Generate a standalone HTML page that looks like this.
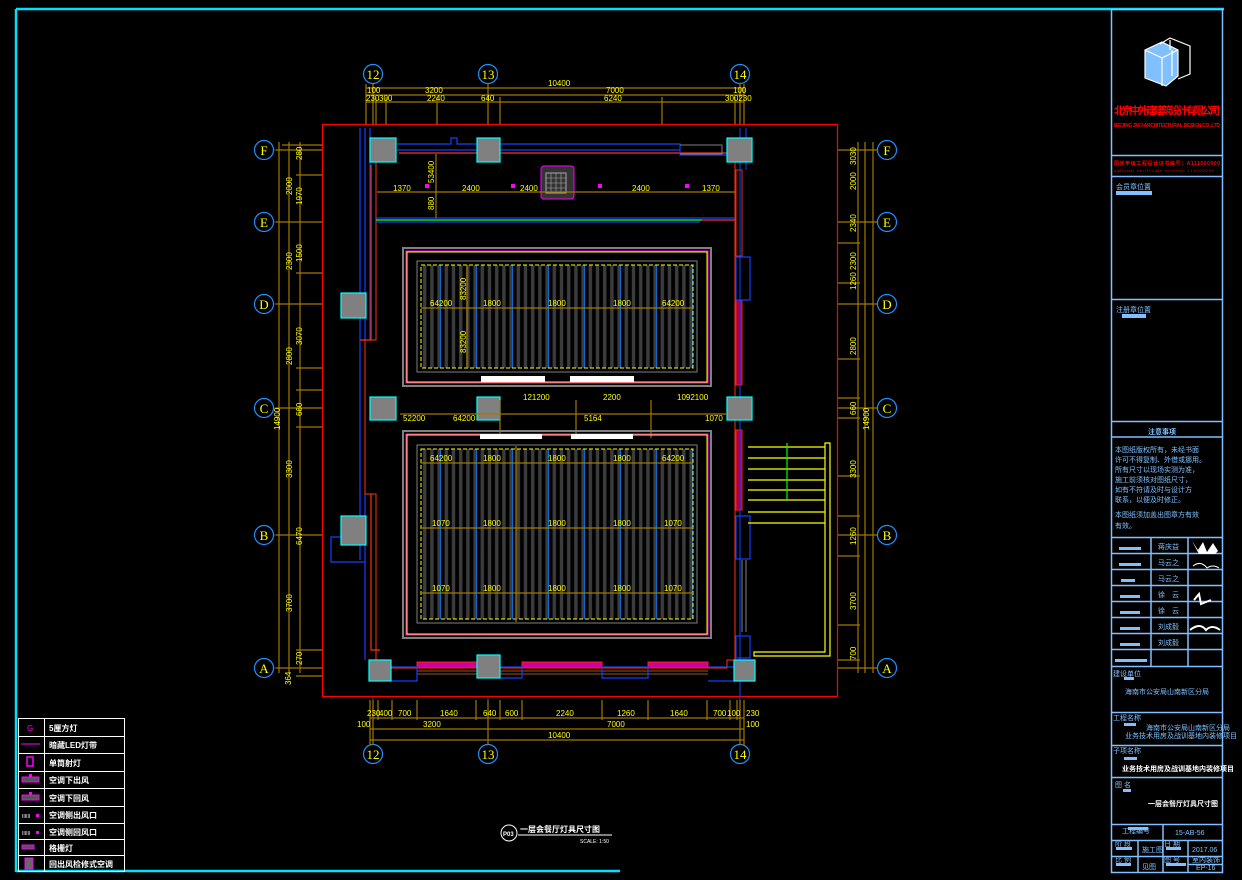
<!DOCTYPE html>
<html><head><meta charset="utf-8"><style>
html,body{margin:0;padding:0;background:#000;width:1242px;height:880px;overflow:hidden}
svg{display:block}
text{font-family:"Liberation Sans","Noto Sans CJK SC",sans-serif}
.y{fill:#ffff00;font-size:8px}
.d{stroke:#a07800;stroke-width:1.2;fill:none}
.g{fill:#808080;stroke:#00ffff;stroke-width:1.2}
.b{stroke:#1040ff;fill:none;stroke-width:1.2}
.gc{fill:none;stroke:#1e90ff;stroke-width:1.2}
.gt{fill:#ffff00;font-size:13px;font-family:"Liberation Serif",serif;text-anchor:middle}
.tb{stroke:#80c0ff;fill:none;stroke-width:1.5}
.tbt{fill:#80c0ff;font-size:7px}
.w{fill:#ffffff;font-size:8px;font-weight:bold}
</style></head><body>
<svg width="1242" height="880" viewBox="0 0 1242 880" xmlns="http://www.w3.org/2000/svg">
<defs>
<pattern id="st" x="421" y="0" width="7.2" height="10" patternUnits="userSpaceOnUse">
<rect x="2" y="0" width="3.4" height="10" fill="#3c3c3c"/>
</pattern>
<pattern id="bl" x="421" y="0" width="36" height="10" patternUnits="userSpaceOnUse">
<rect x="19" y="0" width="1" height="10" fill="#0a6cd0"/>
</pattern>
</defs>
<path d="M16 9H1224M16 9V872M16 871H620" stroke="#00e0ff" stroke-width="2.5" fill="none"/>
<rect x="322.5" y="124.5" width="515" height="572" fill="none" stroke="#ff0000" stroke-width="1.2"/>
<path d="M373 84V124M488 84V124M740 84V124M373 697V743M488 697V743M740 697V743" stroke="#1040ff"/>
<path d="M273 150H322M273 222H322M273 304H322M273 408H322M273 535H322M273 668H322M838 150H877M838 222H877M838 304H877M838 408H877M838 535H877M838 668H877" stroke="#1040ff"/>
<g>
<circle cx="373" cy="74" r="9.5" class="gc"/><text x="373" y="79" class="gt">12</text>
<circle cx="488" cy="74" r="9.5" class="gc"/><text x="488" y="79" class="gt">13</text>
<circle cx="740" cy="74" r="9.5" class="gc"/><text x="740" y="79" class="gt">14</text>
<circle cx="373" cy="754" r="9.5" class="gc"/><text x="373" y="759" class="gt">12</text>
<circle cx="488" cy="754" r="9.5" class="gc"/><text x="488" y="759" class="gt">13</text>
<circle cx="740" cy="754" r="9.5" class="gc"/><text x="740" y="759" class="gt">14</text>
<circle cx="264" cy="150" r="9.5" class="gc"/><text x="264" y="155" class="gt">F</text>
<circle cx="264" cy="222" r="9.5" class="gc"/><text x="264" y="227" class="gt">E</text>
<circle cx="264" cy="304" r="9.5" class="gc"/><text x="264" y="309" class="gt">D</text>
<circle cx="264" cy="408" r="9.5" class="gc"/><text x="264" y="413" class="gt">C</text>
<circle cx="264" cy="535" r="9.5" class="gc"/><text x="264" y="540" class="gt">B</text>
<circle cx="264" cy="668" r="9.5" class="gc"/><text x="264" y="673" class="gt">A</text>
<circle cx="887" cy="150" r="9.5" class="gc"/><text x="887" y="155" class="gt">F</text>
<circle cx="887" cy="222" r="9.5" class="gc"/><text x="887" y="227" class="gt">E</text>
<circle cx="887" cy="304" r="9.5" class="gc"/><text x="887" y="309" class="gt">D</text>
<circle cx="887" cy="408" r="9.5" class="gc"/><text x="887" y="413" class="gt">C</text>
<circle cx="887" cy="535" r="9.5" class="gc"/><text x="887" y="540" class="gt">B</text>
<circle cx="887" cy="668" r="9.5" class="gc"/><text x="887" y="673" class="gt">A</text>
</g>
<path class="d" d="M366 88H744M366 95H744M366 102H744M366 84V124M373 84V124M376 97V124M386 97V124M437 97V124M662 97V124M488 84V124M500 97V124M735 97V124M740 84V124M744 84V124"/>
<text class="y" x="548" y="86">10400</text><text class="y" x="367" y="93">100</text><text class="y" x="425" y="93">3200</text><text class="y" x="606" y="93">7000</text><text class="y" x="733" y="93">100</text>
<text class="y" x="366" y="101">230</text><text class="y" x="379" y="101">300</text><text class="y" x="427" y="101">2240</text><text class="y" x="481" y="101">640</text><text class="y" x="604" y="101">6240</text><text class="y" x="725" y="101">300230</text>
<path class="d" d="M370 718H744M370 729H744M370 740H744M370 700V745M373 700V745M378 700V720M392 700V720M417 700V720M476 700V720M488 700V745M500 700V720M522 700V720M602 700V720M648 700V720M707 700V720M730 700V720M737 700V720M740 700V745M744 700V745"/>
<text class="y" x="367" y="716">230</text><text class="y" x="379" y="716">400</text><text class="y" x="398" y="716">700</text><text class="y" x="440" y="716">1640</text><text class="y" x="483" y="716">640</text><text class="y" x="505" y="716">600</text><text class="y" x="556" y="716">2240</text><text class="y" x="617" y="716">1260</text><text class="y" x="670" y="716">1640</text><text class="y" x="713" y="716">700</text><text class="y" x="727" y="716">100</text><text class="y" x="746" y="716">230</text>
<text class="y" x="357" y="727">100</text><text class="y" x="423" y="727">3200</text><text class="y" x="607" y="727">7000</text><text class="y" x="746" y="727">100</text>
<text class="y" x="548" y="738">10400</text>
<path class="d" d="M279 142V673M289 142V673M300 142V673M276 150H322M276 222H322M276 304H322M276 408H322M276 535H322M276 668H322M296 175H322M296 273H322M296 368H322M296 390H322M296 427H322M296 650H322M296 676H322M282 145H322"/>
<g class="y" font-size="8">
<text transform="translate(292,195) rotate(-90)">2000</text><text transform="translate(292,270) rotate(-90)">2300</text><text transform="translate(292,365) rotate(-90)">2800</text><text transform="translate(292,478) rotate(-90)">3300</text><text transform="translate(292,612) rotate(-90)">3700</text>
<text transform="translate(302,205) rotate(-90)">1970</text><text transform="translate(302,262) rotate(-90)">1500</text><text transform="translate(302,345) rotate(-90)">3070</text><text transform="translate(302,416) rotate(-90)">660</text><text transform="translate(302,545) rotate(-90)">6470</text><text transform="translate(302,665) rotate(-90)">270</text><text transform="translate(302,160) rotate(-90)">280</text>
<text transform="translate(280,430) rotate(-90)">14900</text><text transform="translate(291,685) rotate(-90)">364</text>
</g>
<path class="d" d="M858 142V673M865 142V673M873 142V673M838 150H877M838 222H877M838 304H877M838 408H877M838 535H877M838 668H877M838 243H860M838 283H860M838 359H860M838 398H860M838 418H860M838 476H860M838 516H860M838 556H860M838 625H860M838 660H860"/>
<g class="y" font-size="8">
<text transform="translate(856,190) rotate(-90)">2000</text><text transform="translate(856,232) rotate(-90)">2340</text><text transform="translate(856,270) rotate(-90)">2300</text><text transform="translate(856,290) rotate(-90)">1260</text><text transform="translate(856,355) rotate(-90)">2800</text><text transform="translate(856,415) rotate(-90)">660</text><text transform="translate(856,478) rotate(-90)">3300</text><text transform="translate(856,545) rotate(-90)">1260</text><text transform="translate(856,610) rotate(-90)">3700</text><text transform="translate(856,660) rotate(-90)">700</text>
<text transform="translate(869,430) rotate(-90)">14900</text><text transform="translate(856,165) rotate(-90)">3030</text>
</g>
<path class="b" d="M360 128V340M365 128V340M370 128V340M360 494V560M365 494V660M360 340V494M331 537H365V562H331Z"/>
<path d="M371 165V340H360M371 494V650H380M399 153H727M376 220H735" stroke="#ff3010" stroke-width="1.2" fill="none"/>
<path d="M376 160V340H365V494H376V660H388V668H727V660H735V155" stroke="#ff3010" fill="none"/>
<path class="b" d="M397 144H451V138H457V144H477M500 144H680V155H727M397 150H680M376 218H735M376 222H700" />
<path d="M376 220H702" stroke="#00ff00" stroke-width="1.2"/>
<path d="M680 145H722V154H680" stroke="#808080" fill="none"/>
<rect x="736" y="170" width="6" height="86" fill="none" stroke="#ff2000"/>
<rect x="736" y="300" width="6" height="85" fill="#a00050" stroke="#ff2000"/>
<rect x="736" y="430" width="6" height="80" fill="#a00050" stroke="#ff2000"/>
<rect x="736" y="257" width="14" height="43" class="b"/>
<rect x="736" y="516" width="14" height="43" class="b"/>
<rect x="736" y="636" width="14" height="22" class="b"/>
<path d="M740 128V700M746 128V170" stroke="#1040ff" fill="none"/>
<path d="M742 560V632M746 560V632" stroke="#808080"/>
<rect x="417" y="662" width="60" height="6" fill="#d000a0" stroke="#ff2000"/>
<rect x="522" y="662" width="80" height="6" fill="#d000a0" stroke="#ff2000"/>
<rect x="648" y="662" width="60" height="6" fill="#d000a0" stroke="#ff2000"/>
<path d="M417 671H708M417 674H708" stroke="#a05020"/>
<path class="b" d="M391 667H417V681H391M500 667H522V678H500M602 667H648V678H602ZM708 667H734V681H708"/>
<g stroke="#ffff00" fill="none" stroke-width="1.2">
<path d="M748 447H825M748 458H825M748 469H825M748 480H825M748 490H825M748 500H825M748 512H825M748 523H825"/>
<path d="M825 443H830V656H754V652H825Z"/>
</g>
<path d="M787 443V500" stroke="#00ff00" stroke-width="1.2"/>
<rect class="g" x="370" y="138" width="26" height="24"/>
<rect class="g" x="477" y="138" width="23" height="24"/>
<rect class="g" x="727" y="138" width="25" height="24"/>
<rect class="g" x="341" y="293" width="25" height="25"/>
<rect class="g" x="370" y="397" width="26" height="23"/>
<rect class="g" x="477" y="397" width="23" height="23"/>
<rect class="g" x="727" y="397" width="25" height="23"/>
<rect class="g" x="341" y="516" width="25" height="29"/>
<rect class="g" x="369" y="660" width="22" height="21"/>
<rect class="g" x="477" y="655" width="23" height="23"/>
<rect class="g" x="734" y="660" width="21" height="21"/>
<rect x="541" y="166" width="33" height="33" fill="#333" stroke="#ff00ff" rx="3"/>
<rect x="546" y="173" width="20" height="20" fill="none" stroke="#aaa"/>
<path d="M546 178H566M546 183H566M546 188H566M551 173V193M556 173V193M561 173V193" stroke="#aaa" stroke-width="0.6"/>
<path class="d" d="M377 192H735M436 154V218"/>
<text class="y" x="393" y="191">1370</text><text class="y" x="462" y="191">2400</text><text class="y" x="520" y="191">2400</text><text class="y" x="632" y="191">2400</text><text class="y" x="702" y="191">1370</text>
<text class="y" transform="translate(434,183) rotate(-90)">53400</text><text class="y" transform="translate(434,210) rotate(-90)">880</text>
<g fill="#ff00ff"><rect x="425" y="184" width="4" height="4"/><rect x="511" y="184" width="4" height="4"/><rect x="598" y="184" width="4" height="4"/><rect x="685" y="184" width="4" height="4"/></g>
<rect x="403" y="248" width="308" height="138" fill="none" stroke="#808080" stroke-width="2"/>
<rect x="406" y="251" width="302" height="132" fill="none" stroke="#ff00ff"/>
<rect x="407" y="252" width="300" height="130" fill="none" stroke="#ffff00"/>
<rect x="417" y="261" width="280" height="111" fill="none" stroke="#808080"/>
<rect x="421" y="265" width="272" height="103" fill="url(#st)"/>
<rect x="421" y="265" width="272" height="103" fill="url(#bl)"/>
<rect x="421" y="265" width="272" height="103" fill="none" stroke="#ffff00" stroke-dasharray="4 2"/>
<path class="d" d="M421 308H693M467 265V368"/>
<text class="y" x="430" y="306">64200</text><text class="y" x="483" y="306">1800</text><text class="y" x="548" y="306">1800</text><text class="y" x="613" y="306">1800</text><text class="y" x="662" y="306">64200</text>
<text class="y" transform="translate(466,300) rotate(-90)">83200</text><text class="y" transform="translate(466,353) rotate(-90)">83200</text>
<rect x="481" y="376" width="64" height="6" fill="#fff"/><rect x="570" y="376" width="64" height="6" fill="#fff"/>
<path class="d" d="M400 414H727M500 400V438M576 400V438M651 400V438"/>
<text class="y" x="403" y="421">52200</text><text class="y" x="453" y="421">64200</text><text class="y" x="523" y="400">121200</text><text class="y" x="603" y="400">2200</text><text class="y" x="677" y="400">1092100</text><text class="y" x="584" y="421">5164</text><text class="y" x="705" y="421">1070</text>
<rect x="403" y="431" width="308" height="207" fill="none" stroke="#808080" stroke-width="2"/>
<rect x="406" y="434" width="302" height="201" fill="none" stroke="#ff00ff"/>
<rect x="407" y="435" width="300" height="199" fill="none" stroke="#ffff00"/>
<rect x="417" y="445" width="280" height="178" fill="none" stroke="#808080"/>
<rect x="421" y="449" width="272" height="170" fill="url(#st)"/>
<rect x="421" y="449" width="272" height="170" fill="url(#bl)"/>
<rect x="421" y="449" width="272" height="170" fill="none" stroke="#ffff00" stroke-dasharray="4 2"/>
<rect x="480" y="434" width="62" height="5" fill="#fff"/><rect x="571" y="434" width="62" height="5" fill="#fff"/>
<path class="d" d="M421 463H693M421 528H693M421 593H693M516 446V622"/>
<g class="y">
<text x="430" y="461">64200</text><text x="483" y="461">1800</text><text x="548" y="461">1800</text><text x="613" y="461">1800</text><text x="662" y="461">64200</text>
<text x="432" y="526">1070</text><text x="483" y="526">1800</text><text x="548" y="526">1800</text><text x="613" y="526">1800</text><text x="664" y="526">1070</text>
<text x="432" y="591">1070</text><text x="483" y="591">1800</text><text x="548" y="591">1800</text><text x="613" y="591">1800</text><text x="664" y="591">1070</text>
</g>
<g stroke="#fff" fill="none" stroke-width="1">
<rect x="18.5" y="718.5" width="106" height="153"/>
<path d="M44.5 718V871M18 736.5H125M18 753.5H125M18 771.5H125M18 788.5H125M18 806.5H125M18 823.5H125M18 839.5H125M18 855.5H125"/>
</g>
<g class="w" font-size="8.5">
<text x="49" y="731">5厘方灯</text><text x="49" y="748">暗藏LED灯带</text><text x="49" y="766">单筒射灯</text><text x="49" y="783">空调下出风</text><text x="49" y="801">空调下回风</text><text x="49" y="818">空调侧出风口</text><text x="49" y="835">空调侧回风口</text><text x="49" y="851">格栅灯</text><text x="49" y="867">回出风检修式空调</text>
</g>
<path d="M21 744H40" stroke="#ff00ff"/>
<rect x="27" y="757" width="6" height="9" fill="none" stroke="#ff00ff" stroke-width="1.5"/>
<rect x="22" y="777" width="17" height="5" fill="#555" stroke="#ff00ff"/><rect x="29" y="774" width="3" height="3" fill="#ff00ff"/>
<rect x="22" y="795" width="17" height="5" fill="#555" stroke="#ff00ff"/><rect x="29" y="792" width="3" height="3" fill="#ff00ff"/>
<text x="22" y="818" fill="#fff" font-size="5">IIIIII</text><rect x="36" y="814" width="3" height="3" fill="#ff00ff"/>
<text x="22" y="835" fill="#fff" font-size="5">IIIIII</text><rect x="36" y="831" width="3" height="3" fill="#ff00ff"/>
<rect x="22" y="845" width="12" height="4" fill="#555" stroke="#ff00ff"/>
<rect x="25" y="858" width="8" height="11" fill="#666" stroke="#ff00ff"/>
<text x="27" y="731" fill="#ff00ff" font-size="8">G</text>
<circle cx="509" cy="833" r="8" fill="none" stroke="#fff"/><text x="503" y="836" fill="#fff" font-size="6" font-weight="bold">P03</text>
<text x="520" y="832" class="w" font-size="11">一层会餐厅灯具尺寸图</text>
<path d="M518 835H612" stroke="#fff"/>
<text x="580" y="843" fill="#fff" font-size="5">SCALE: 1:50</text>
<rect x="1111.5" y="9.5" width="111" height="863" class="tb"/>
<path class="tb" d="M1111 155.5H1223M1111 176.5H1223M1111 299.5H1223M1111 421.5H1223M1111 437H1223M1111 537.5H1223M1111 553.5H1223M1111 569.5H1223M1111 585.5H1223M1111 601.5H1223M1111 617.5H1223M1111 633.5H1223M1111 649.5H1223M1111 666.5H1223M1111 712.5H1223M1111 745.5H1223M1111 777.5H1223M1111 824.5H1223M1111 840.5H1223M1111 856.5H1223M1151 537V666M1188 537V666M1163 824V872M1138 840V872M1188 840V872M1188 864.5H1223"/>
<g stroke="#fff" fill="none" stroke-width="1.2">
<path d="M1145 50L1162 42L1178 50V76L1166 86L1145 78Z" fill="#80c0ff"/>
<path d="M1145 50L1162 58L1178 50M1162 58V86"/>
<path d="M1160 44L1170 38L1190 46V74L1178 79"/>
<path d="M1170 40V50M1172 50V76"/>
</g>
<text x="1114" y="114" fill="#ff0000" font-size="10.5" font-weight="bold" textLength="106">北京中外建建筑设计有限公司</text>
<text x="1114" y="127" fill="#ff0000" font-size="5" font-weight="bold" textLength="106">BEIJING ZWJ ARCHITECTURAL DESIGN CO.,LTD</text>
<text x="1114" y="165" fill="#ff0000" font-size="5" font-weight="bold" textLength="106">国家甲级工程设计证书编号：A111000000</text>
<text x="1114" y="172" fill="#ff0000" font-size="4" textLength="100">national certificate number: 111000000</text>
<text x="1116" y="189" class="tbt">会员章位置</text><rect x="1116" y="191" width="36" height="4" fill="#80c0ff"/>
<text x="1116" y="312" class="tbt">注册章位置</text><rect x="1122" y="314" width="24" height="4" fill="#80c0ff"/>
<text x="1148" y="434" class="tbt" font-weight="bold">注意事项</text>
<g class="tbt" font-size="5"><text x="1115" y="452">本图纸版权所有，未经书面</text><text x="1115" y="462">许可不得复制、外借或挪用。</text><text x="1115" y="472">所有尺寸以现场实测为准，</text><text x="1115" y="482">施工前须核对图纸尺寸，</text><text x="1115" y="492">如有不符请及时与设计方</text><text x="1115" y="502">联系，以便及时修正。</text><text x="1115" y="517">本图纸须加盖出图章方有效</text><text x="1115" y="528">有效。</text></g>
<g class="tbt" font-size="7"><text x="1158" y="549">蒋庆益</text><text x="1158" y="565">马云之</text><text x="1158" y="581">马云之</text><text x="1158" y="597">徐　云</text><text x="1158" y="613">徐　云</text><text x="1158" y="629">刘成毅</text><text x="1158" y="645">刘成毅</text></g>
<g fill="#80c0ff"><rect x="1119" y="547" width="22" height="3"/><rect x="1119" y="563" width="22" height="3"/><rect x="1121" y="579" width="14" height="3"/><rect x="1120" y="595" width="20" height="3"/><rect x="1120" y="611" width="20" height="3"/><rect x="1120" y="627" width="20" height="3"/><rect x="1120" y="643" width="20" height="3"/><rect x="1115" y="659" width="32" height="3"/><rect x="1124" y="677" width="10" height="3"/><rect x="1124" y="723" width="12" height="3"/><rect x="1124" y="757" width="13" height="3"/><rect x="1123" y="789" width="8" height="3"/><rect x="1128" y="827" width="20" height="3"/><rect x="1116" y="847" width="16" height="3"/><rect x="1166" y="847" width="15" height="3"/><rect x="1116" y="863" width="15" height="3"/><rect x="1166" y="863" width="20" height="3"/></g>
<g fill="#fff"><path d="M1192 541l6 9l5-8l4 10l6-9l5 8l-3 3l-16 0z"/><path d="M1193 566q8-6 14 2q6-4 12 0" stroke="#fff" fill="none"/><path d="M1194 600l5-6l2 10l10-4" stroke="#fff" fill="none" stroke-width="2"/><path d="M1190 630q10-8 16 0q6-6 14 0" stroke="#fff" fill="none" stroke-width="2"/></g>
<g class="tbt" font-size="5"><text x="1113" y="676">建设单位</text><text x="1125" y="694">海南市公安局山南新区分局</text>
<text x="1113" y="720">工程名称</text><text x="1146" y="730">海南市公安局山南新区分局</text><text x="1125" y="738">业务技术用房及战训基地内装修项目</text>
<text x="1113" y="753">子项名称</text><text x="1122" y="771" fill="#fff" font-weight="bold">业务技术用房及战训基地内装修项目</text>
<text x="1115" y="787">图 名</text><text x="1148" y="806" fill="#fff" font-weight="bold">一层会餐厅灯具尺寸图</text>
<text x="1122" y="833">工程编号</text><text x="1175" y="835">15-AB-56</text>
<text x="1115" y="846">阶 段</text><text x="1142" y="852">施工图</text><text x="1164" y="846">日 期</text><text x="1192" y="852">2017.06</text>
<text x="1115" y="862">比 例</text><text x="1142" y="869">见图</text><text x="1164" y="862">图 号</text><text x="1192" y="862">室内装饰</text><text x="1196" y="870">EP-16</text></g>
</svg>
</body></html>
